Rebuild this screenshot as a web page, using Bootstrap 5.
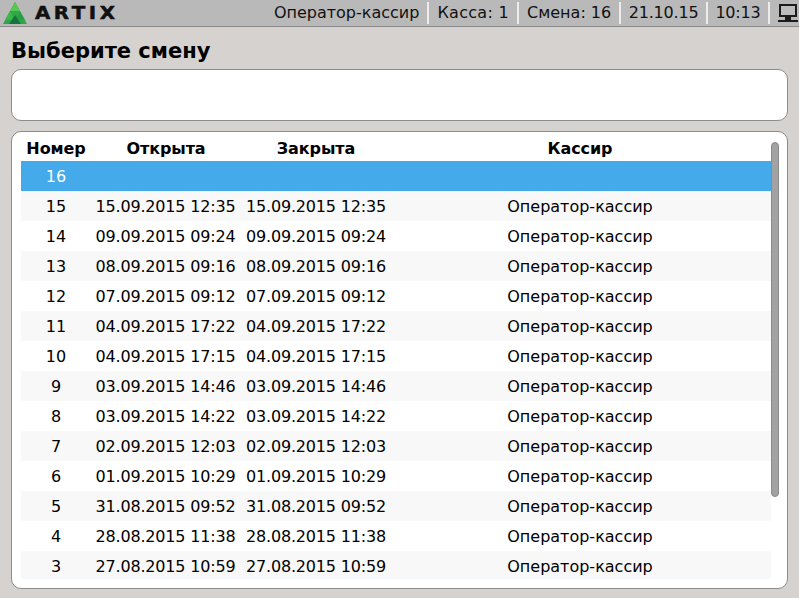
<!DOCTYPE html>
<html lang="ru">
<head>
<meta charset="utf-8">
<title>Artix</title>
<link href="https://cdn.jsdelivr.net/npm/bootstrap@5.3.0/dist/css/bootstrap.min.css" rel="stylesheet">
<style>
html,body{height:100%;}
body{background:#d6d2cf;color:#000;font-family:"DejaVu Sans",sans-serif;font-size:16px;overflow:hidden;}
.shell{width:799px;height:598px;}
.topbar{height:27px;background:#b9b9b9;border-bottom:1px solid #8a8a8a;padding-left:3px;}
.brand{font-weight:700;font-size:18px;letter-spacing:3.2px;line-height:26px;margin-left:8px;transform:scaleX(1.1);transform-origin:left center;-webkit-text-stroke:.5px #111;color:#111;}
.stat{height:22px;line-height:22px;padding:0 8px;border-right:2px solid #ececec;white-space:nowrap;color:#111;}
.stat-wide{letter-spacing:.3px;}
.stat-num{letter-spacing:-.2px;padding:0 7.5px;}
.net{padding:0 1px 0 8px;}
.title{font-size:21px;font-weight:700;line-height:24px;margin:12px 0 6px 11px;}
.box{background:#fff;border:1px solid #8c8c8c;border-radius:10px;margin:0 11px;width:777px;}
.box-top{height:52px;margin-bottom:10px;flex:none;}
.box-list{height:458px;padding:2px 8px 8px 9px;overflow:hidden;flex:none;}
.scrollview{width:750px;height:445px;overflow:hidden;flex:none;}
.grid-t{table-layout:fixed;width:750px;margin:0;border-collapse:collapse;}
.grid-t th,.grid-t td{padding:0;text-align:center;border:0;background:transparent;color:#000;box-shadow:none;white-space:nowrap;}
.grid-t th{height:27px;font-weight:700;padding-top:2px;line-height:25px;letter-spacing:-.1px;}
.grid-t td{height:30px;padding-top:2px;line-height:28px;}
.grid-t td.dt{letter-spacing:-.18px;}
.grid-t td.dt-first{padding-right:1px;}
.grid-t th:last-child,.grid-t td:last-child{padding-right:2px;}
.grid-t tbody tr:nth-child(even) td{background:#f8f8f8;}
.grid-t tbody tr.sel td{background:#44aae9;color:#fff;}
.rail{width:8px;padding-top:8px;flex:none;}
.thumb{width:8px;height:355px;background:#a2a2a2;border:1px solid #8a8a8a;border-radius:4px;}
</style>
</head>
<body>
<div class="shell d-flex flex-column">
  <div class="topbar d-flex align-items-center">
    <svg width="24" height="24" viewBox="0 0 24 24" class="flex-shrink-0" aria-hidden="true">
      <polygon points="12,1 0,23 24,23" fill="#2fa84a"/>
      <polygon points="12,1 7,10 17,10" fill="#58c653"/>
      <polygon points="7,10 2,19 12,19" fill="#3ab64c"/>
      <polygon points="17,10 12,19 22,19" fill="#2a9f48"/>
      <polygon points="6,23 12,14 18,23" fill="#15733e"/>
    </svg>
    <div class="brand">ARTIX</div>
    <div class="ms-auto d-flex align-items-center">
      <div class="stat">Оператор-кассир</div>
      <div class="stat stat-wide">Касса: 1</div>
      <div class="stat">Смена: 16</div>
      <div class="stat stat-num">21.10.15</div>
      <div class="stat stat-num">10:13</div>
      <div class="net d-flex">
        <svg width="20" height="22" viewBox="0 0 20 22" aria-hidden="true">
          <path d="M2 3h16v11H2z" fill="#bdbdbd" stroke="#1c1c1c" stroke-width="2"/>
          <path d="M7 15h6v2H7z" fill="#1c1c1c"/>
          <path d="M0 18h7v2H0z M13 18h7v2h-7z M7 17h6v3H7z" fill="#1c1c1c"/>
        </svg>
      </div>
    </div>
  </div>
  <h1 class="title">Выберите смену</h1>
  <div class="box box-top"></div>
  <div class="box box-list d-flex">
    <div class="scrollview">
      <table class="table grid-t">
        <colgroup><col style="width:70px"><col style="width:150px"><col style="width:150px"><col style="width:380px"></colgroup>
        <thead><tr><th>Номер</th><th>Открыта</th><th>Закрыта</th><th>Кассир</th></tr></thead>
        <tbody>
          <tr class="sel"><td>16</td><td></td><td></td><td></td></tr>
          <tr><td>15</td><td class="dt dt-first">15.09.2015 12:35</td><td class="dt">15.09.2015 12:35</td><td>Оператор-кассир</td></tr>
          <tr><td>14</td><td class="dt dt-first">09.09.2015 09:24</td><td class="dt">09.09.2015 09:24</td><td>Оператор-кассир</td></tr>
          <tr><td>13</td><td class="dt dt-first">08.09.2015 09:16</td><td class="dt">08.09.2015 09:16</td><td>Оператор-кассир</td></tr>
          <tr><td>12</td><td class="dt dt-first">07.09.2015 09:12</td><td class="dt">07.09.2015 09:12</td><td>Оператор-кассир</td></tr>
          <tr><td>11</td><td class="dt dt-first">04.09.2015 17:22</td><td class="dt">04.09.2015 17:22</td><td>Оператор-кассир</td></tr>
          <tr><td>10</td><td class="dt dt-first">04.09.2015 17:15</td><td class="dt">04.09.2015 17:15</td><td>Оператор-кассир</td></tr>
          <tr><td>9</td><td class="dt dt-first">03.09.2015 14:46</td><td class="dt">03.09.2015 14:46</td><td>Оператор-кассир</td></tr>
          <tr><td>8</td><td class="dt dt-first">03.09.2015 14:22</td><td class="dt">03.09.2015 14:22</td><td>Оператор-кассир</td></tr>
          <tr><td>7</td><td class="dt dt-first">02.09.2015 12:03</td><td class="dt">02.09.2015 12:03</td><td>Оператор-кассир</td></tr>
          <tr><td>6</td><td class="dt dt-first">01.09.2015 10:29</td><td class="dt">01.09.2015 10:29</td><td>Оператор-кассир</td></tr>
          <tr><td>5</td><td class="dt dt-first">31.08.2015 09:52</td><td class="dt">31.08.2015 09:52</td><td>Оператор-кассир</td></tr>
          <tr><td>4</td><td class="dt dt-first">28.08.2015 11:38</td><td class="dt">28.08.2015 11:38</td><td>Оператор-кассир</td></tr>
          <tr><td>3</td><td class="dt dt-first">27.08.2015 10:59</td><td class="dt">27.08.2015 10:59</td><td>Оператор-кассир</td></tr>
        </tbody>
      </table>
    </div>
    <div class="rail"><div class="thumb"></div></div>
  </div>
</div>
<script src="https://cdn.jsdelivr.net/npm/bootstrap@5.3.0/dist/js/bootstrap.bundle.min.js"></script>
</body>
</html>
